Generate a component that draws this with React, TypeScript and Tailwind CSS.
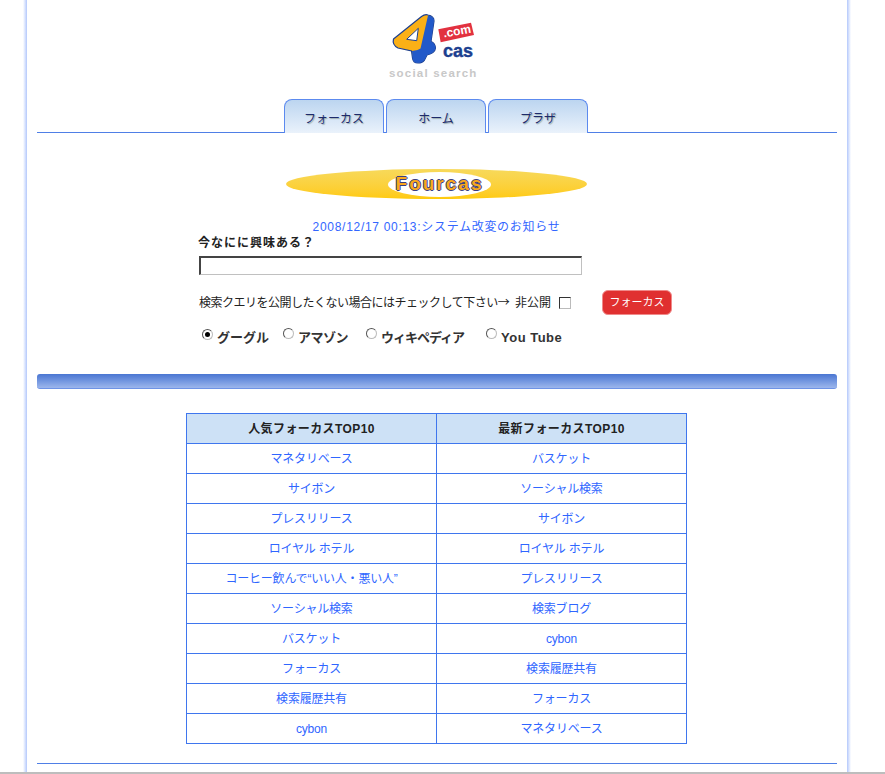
const font = "[font-family:'Liberation_Sans','Noto_Sans_CJK_JP',sans-serif]";

const popular = [
  "マネタリベース",
  "サイボン",
  "プレスリリース",
  "ロイヤル ホテル",
  "コーヒー飲んで“いい人・悪い人”",
  "ソーシャル検索",
  "バスケット",
  "フォーカス",
  "検索履歴共有",
  "cybon",
];

const latest = [
  "バスケット",
  "ソーシャル検索",
  "サイボン",
  "ロイヤル ホテル",
  "プレスリリース",
  "検索ブログ",
  "cybon",
  "検索履歴共有",
  "フォーカス",
  "マネタリベース",
];

const Logo = () => (
  <svg width="90" height="70" viewBox="0 0 90 70" className="block">
    <path
      d="M4.5 29 L32.5 6.5 Q36 4 39 5 Q45 6 45 11 L42 31.5 Q46 33 46.5 38 Q46 43 38 45 L35.5 50 Q33 53 29 53 Q24 53 23.5 48 L22.5 41 L9 38 Q3 35 4.5 29 Z"
      fill="#fbb016"
      stroke="#1c3f8f"
      strokeWidth="1.2"
    />
    <path
      d="M39 5.5 Q45 6 45 11 L42 31.5 Q46 33 46.5 38 Q46 43 38 45 L35.5 50 Q33 53 29 53 Q24 53 23.5 48 L23 41 L28.5 40 L31.5 38.5 Z"
      fill="#2259c9"
    />
    <path d="M17.7 29.3 L29.3 18.3 L27.7 30.7 Z" fill="#ffffff" stroke="#1c3f8f" strokeWidth="1" />
    <path d="M49.3 19.3 L82 12.7 L85 25 L51.7 32.3 Z" fill="#e2313f" />
    <text x="55" y="27.5" fontSize="12" fontWeight="700" fill="#fff" transform="rotate(-10 55 27.5)" fontFamily="Liberation Sans, sans-serif">
      .com
    </text>
    <text x="54" y="47" fontSize="18" fontWeight="700" fill="#1c3f8f" stroke="#1c3f8f" strokeWidth="0.4" fontFamily="Liberation Sans, sans-serif">
      cas
    </text>
    <text x="0" y="67" fontSize="11.5" fontWeight="700" fill="#c8c8c8" letterSpacing="1.2" fontFamily="Liberation Sans, sans-serif">
      social search
    </text>
  </svg>
);

const Tab = ({ label }: { label: string }) => (
  <div className="relative -mb-px flex h-[34px] w-[100px] items-center justify-center rounded-t-lg border border-b-0 border-[#5c8aef] bg-gradient-to-b from-[#bcd5f0] to-[#eaf2fb] pt-[5px] text-xs text-[#1d2a6b] [text-shadow:1px_1px_1px_#9aa]">
    {label}
  </div>
);

const Radio = ({
  label,
  checked,
  className,
  labelClass,
}: {
  label: string;
  checked?: boolean;
  className: string;
  labelClass: string;
}) => (
  <label className={`flex items-start ${className}`}>
    <span
      className={`flex h-[11px] w-[11px] items-center justify-center rounded-full border border-t-[#555] border-l-[#555] border-r-[#bbb] border-b-[#bbb] bg-white ${
        checked ? "mt-0" : "mt-[-1px]"
      }`}
    >
      {checked && <span className="h-[5px] w-[5px] rounded-full bg-black" />}
    </span>
    <span className={`ml-1 mt-[-1px] text-[13px] font-bold text-[#333] ${labelClass}`}>{label}</span>
  </label>
);

const App = () => {
  return (
    <div className={`${font} h-[774px] overflow-hidden bg-white`}>
      <div className="flex h-[772px] w-[885px]">
        <div className="ml-[23px] w-[4px] bg-gradient-to-r from-white to-[#b4c8fb]" />
        <div className="w-[820px] bg-white px-[10px]">
          <div className="flex justify-center pt-[10px] pr-[6px]">
            <Logo />
          </div>

          <div className="mt-[19px] flex justify-center gap-[2px] border-b border-[#4f7fe6] pr-[2px]">
            <Tab label="フォーカス" />
            <Tab label="ホーム" />
            <Tab label="プラザ" />
          </div>

          <div className="mt-9 flex justify-center pr-px">
            <div className="relative flex h-[30px] w-[301px] items-center justify-center rounded-[50%] bg-gradient-to-b from-[#f7d95a] to-[#ffca08]">
              <div className="ml-[6px] flex h-[25px] w-[103px] items-center justify-center rounded-[50%] bg-white text-[19px] font-bold tracking-[2px] text-[#f8a81c] [text-shadow:-1px_0_#3b3f80,1px_0_#3b3f80,0_-1px_#3b3f80,0_1px_#3b3f80]">
                Fourcas
              </div>
            </div>
          </div>

          <div className="mt-[21px] pr-px text-center text-xs leading-[15px] tracking-[0.7px] text-[#3366ff]">
            2008/12/17 00:13:システム改変のお知らせ
          </div>

          <div className="ml-[161px] text-xs font-bold leading-[16px] tracking-[1px] text-[#222]">今なにに興味ある？</div>
          <div className="ml-[162px] mt-[5px] h-[19px] w-[383px] border border-t-2 border-l-2 border-t-[#444] border-l-[#444] border-r-[#c0c0c0] border-b-[#c0c0c0] bg-white" />

          <div className="ml-[162px] mt-[15px] flex items-center text-xs text-[#222]">
            <span className="w-[316px] whitespace-nowrap tracking-[-0.5px]">
              検索クエリを公開したくない場合にはチェックして下さい
              <span className="[font-family:'Noto_Sans_CJK_JP',sans-serif]">→</span>
            </span>
            <span className="w-[44px] whitespace-nowrap">非公開</span>
            <span className="h-[12px] w-[12px] border border-[#333] border-r-[#bbb] border-b-[#bbb] bg-white" />
            <button className="ml-[31px] h-[25px] w-[70px] rounded-md border border-[#f08a8a] bg-[#e03030] text-[11px] text-white">
              フォーカス
            </button>
          </div>

          <div className="ml-[165px] mt-[14px] flex h-[20px]">
            <Radio label="グーグル" checked className="w-[81px]" labelClass="tracking-normal" />
            <Radio label="アマゾン" className="w-[83px]" labelClass="tracking-[-0.5px]" />
            <Radio label="ウィキペディア" className="w-[120px]" labelClass="tracking-[-1px]" />
            <Radio label="You Tube" className="w-[100px]" labelClass="tracking-[0.5px]" />
          </div>

          <div className="mt-[25px] h-[15px] rounded-[3px] border-b border-[#6e93e6] bg-gradient-to-b from-[#4a76d2] to-[#9db6ec]" />

          <table className="ml-[149px] mt-[24px] w-[501px] table-fixed border-collapse text-center text-xs">
            <thead>
              <tr className="h-[30px] bg-[#cde1f6] text-[#222]">
                <th className="border border-[#3f76ee] font-bold tracking-[0.4px]">人気フォーカスTOP10</th>
                <th className="border border-[#3f76ee] font-bold tracking-[0.4px]">最新フォーカスTOP10</th>
              </tr>
            </thead>
            <tbody>
              {popular.map((item, i) => (
                <tr key={i} className="h-[30px] text-[#2f66ff]">
                  <td className="border border-[#3f76ee] tracking-[-0.2px]">{item}</td>
                  <td className="border border-[#3f76ee] tracking-[-0.2px]">{latest[i]}</td>
                </tr>
              ))}
            </tbody>
          </table>

          <div className="mt-[19px] border-t border-[#4f7fe6]" />
        </div>
        <div className="w-[4px] bg-gradient-to-r from-[#b4c8fb] to-white" />
      </div>
      <div className="h-[2px] bg-[#bdbdbd]" />
    </div>
  );
};

export default App;
